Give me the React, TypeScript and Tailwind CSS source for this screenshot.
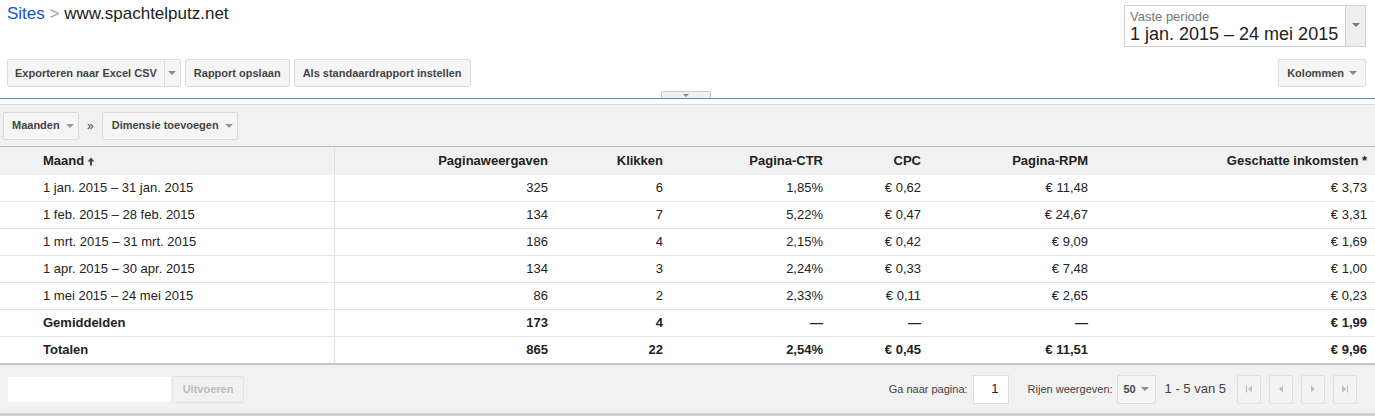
const rows: string[][] = [
  ["1 jan. 2015 – 31 jan. 2015", "325", "6", "1,85%", "€ 0,62", "€ 11,48", "€ 3,73"],
  ["1 feb. 2015 – 28 feb. 2015", "134", "7", "5,22%", "€ 0,47", "€ 24,67", "€ 3,31"],
  ["1 mrt. 2015 – 31 mrt. 2015", "186", "4", "2,15%", "€ 0,42", "€ 9,09", "€ 1,69"],
  ["1 apr. 2015 – 30 apr. 2015", "134", "3", "2,24%", "€ 0,33", "€ 7,48", "€ 1,00"],
  ["1 mei 2015 – 24 mei 2015", "86", "2", "2,33%", "€ 0,11", "€ 2,65", "€ 0,23"],
];

const averages = ["Gemiddelden", "173", "4", "—", "—", "—", "€ 1,99"];
const totals = ["Totalen", "865", "22", "2,54%", "€ 0,45", "€ 11,51", "€ 9,96"];

const headers = ["Paginaweergaven", "Klikken", "Pagina-CTR", "CPC", "Pagina-RPM", "Geschatte inkomsten *"];

const gridCols = "grid grid-cols-[335px_221px_115px_160px_98px_167px_1fr]";

function Caret({ color = "border-t-[#777]" }: { color?: string }) {
  return <span className={`inline-block h-0 w-0 border-x-[4px] border-t-[4px] border-x-transparent ${color}`} />;
}

function ToolButton({ children }: { children: React.ReactNode }) {
  return (
    <button className="flex h-[28px] items-center rounded-[2px] border border-[#dcdcdc] bg-[#f5f5f5] px-[8px] text-[11px] font-bold text-[#444]">
      {children}
    </button>
  );
}

function PagerIcon({ kind }: { kind: "first" | "prev" | "next" | "last" }) {
  return (
    <svg width="8" height="8" viewBox="0 0 8 8" fill="#bdbdbd">
      {kind === "first" && (
        <>
          <rect x="1" y="0.5" width="1" height="7" />
          <path d="M7 0.5 L3 4 L7 7.5 Z" />
        </>
      )}
      {kind === "prev" && <path d="M6 0.5 L2 4 L6 7.5 Z" />}
      {kind === "next" && <path d="M2 0.5 L6 4 L2 7.5 Z" />}
      {kind === "last" && (
        <>
          <path d="M1 0.5 L5 4 L1 7.5 Z" />
          <rect x="6" y="0.5" width="1" height="7" />
        </>
      )}
    </svg>
  );
}

function DataRow({ cells, bold, last }: { cells: string[]; bold?: boolean; last?: boolean }) {
  return (
    <div
      className={`${gridCols} ${last ? "h-[28px] border-b-2 border-[#c6c6c6]" : "h-[27px] border-b border-[#e3e3e3]"} text-[13px] text-[#222] ${bold ? "font-bold" : ""}`}
    >
      <div className="flex items-center border-r border-[#e0e0e0] pl-[43px]">{cells[0]}</div>
      {cells.slice(1).map((c, i) => (
        <div key={i} className="flex items-center justify-end pr-[8px]">
          {c}
        </div>
      ))}
    </div>
  );
}

export default function App() {
  return (
    <div className="h-[416px] w-[1375px] overflow-hidden bg-white font-['Liberation_Sans',Arial,sans-serif] text-[#222]">
      {/* breadcrumb + date range */}
      <div className="flex items-start justify-between pl-[7px] pr-[9px]">
        <div className="pt-[4px] text-[17px] leading-[20px]">
          <span className="text-[#1155cc]">Sites</span>
          <span className="text-[#999]"> &gt; </span>
          <span>www.spachtelputz.net</span>
        </div>
        <div className="mt-[5px] flex h-[42px] border border-[#d0d0d0]">
          <div className="w-[220px] bg-white px-[5px] pt-[3px]">
            <div className="text-[13px] leading-[15px] text-[#777]">Vaste periode</div>
            <div className="text-[18px] leading-[21px] text-[#222]">1 jan. 2015 – 24 mei 2015</div>
          </div>
          <div className="flex w-[20px] justify-center border-l border-[#d0d0d0] bg-[#eeeeee] pt-[17px]">
            <Caret />
          </div>
        </div>
      </div>

      {/* toolbar */}
      <div className="mt-[12px] flex justify-between pl-[7px] pr-[9px]">
        <div className="flex gap-[4px]">
          <div className="flex h-[28px] rounded-[2px] border border-[#dcdcdc] bg-[#f5f5f5] text-[11px] font-bold text-[#444]">
            <span className="flex items-center px-[7px]">Exporteren naar Excel CSV</span>
            <span className="flex w-[16px] items-center justify-center border-l border-[#dcdcdc]">
              <Caret color="border-t-[#888]" />
            </span>
          </div>
          <ToolButton>Rapport opslaan</ToolButton>
          <ToolButton>Als standaardrapport instellen</ToolButton>
        </div>
        <ToolButton>
          <span className="mr-[5px]">Kolommen</span>
          <Caret color="border-t-[#888]" />
        </ToolButton>
      </div>

      {/* collapse handle */}
      <div className="mt-[4px] flex justify-center">
        <div className="mr-[3px] flex h-[7px] w-[50px] items-center justify-center rounded-t-[2px] border-x border-t border-[#c9c9c9] bg-[#f1f1f1]">
          <span className="inline-block h-0 w-0 border-x-[3px] border-t-[3px] border-x-transparent border-t-[#888]" />
        </div>
      </div>
      <div className="h-px bg-[#5b86c9]" />

      {/* dimension bar */}
      <div className="mt-[5px] flex h-[43px] items-center gap-[8px] border-y border-t-[#dadada] border-b-[#b9b9b9] bg-[#f1f1f1] pl-[3px]">
        <button className="flex h-[28px] w-[76px] items-center gap-[6px] rounded-[2px] border border-[#dadada] bg-[#f5f5f5] pl-[8px] text-[11px] font-bold text-[#444]">
          Maanden
          <Caret color="border-t-[#999]" />
        </button>
        <span className="text-[12px] text-[#444]">»</span>
        <button className="flex h-[28px] w-[136px] items-center gap-[6px] rounded-[2px] border border-[#dadada] bg-[#f5f5f5] pl-[9px] text-[11px] font-bold text-[#444]">
          Dimensie toevoegen
          <Caret color="border-t-[#999]" />
        </button>
      </div>

      {/* table */}
      <div className={`${gridCols} h-[28px] bg-[#f1f1f1] text-[13px] font-bold text-[#222]`}>
        <div className="flex items-center border-r border-[#e0e0e0] pl-[43px]">
          Maand
          <svg className="ml-[3px] mt-[1px]" width="8" height="9" viewBox="0 0 8 9" fill="#444">
            <path d="M4 0.5 L7.5 4.5 L5 4.5 L5 8.5 L3 8.5 L3 4.5 L0.5 4.5 Z" />
          </svg>
        </div>
        {headers.map((h) => (
          <div key={h} className="flex items-center justify-end pr-[8px]">
            {h}
          </div>
        ))}
      </div>
      {rows.map((r) => (
        <DataRow key={r[0]} cells={r} />
      ))}
      <DataRow cells={averages} bold />
      <DataRow cells={totals} bold last />

      {/* footer */}
      <div className="flex h-[51px] items-center justify-between border-b-[3px] border-[#cfcfcf] bg-[#f1f1f1] pl-[7px] pr-[18px]">
        <div className="flex">
          <div className="h-[27px] w-[165px] border border-[#f1f1f1] bg-white" />
          <button className="h-[27px] w-[72px] rounded-[2px] border border-[#e2e2e2] bg-[#f1f1f1] text-[11px] font-bold text-[#bbb]">
            Uitvoeren
          </button>
        </div>
        <div className="flex items-center text-[11px] text-[#444]">
          <span>Ga naar pagina:</span>
          <div className="ml-[5px] flex h-[29px] w-[36px] items-center justify-end border border-[#dcdcdc] bg-white pr-[9px] text-[13px] text-[#222]">
            1
          </div>
          <span className="ml-[19px]">Rijen weergeven:</span>
          <button className="ml-[4px] flex h-[29px] w-[39px] items-center justify-center gap-[5px] rounded-[2px] border border-[#dcdcdc] bg-[#f5f5f5] text-[11px] font-bold text-[#444]">
            50
            <Caret color="border-t-[#888]" />
          </button>
          <span className="ml-[9px] text-[13px] text-[#444]">1 - 5 van 5</span>
          <div className="ml-[11px] flex gap-[8px]">
            {(["first", "prev", "next", "last"] as const).map((k) => (
              <button
                key={k}
                className="flex h-[29px] w-[24px] items-center justify-center rounded-[2px] border border-[#e0e0e0] bg-[#f3f3f3]"
              >
                <PagerIcon kind={k} />
              </button>
            ))}
          </div>
        </div>
      </div>
    </div>
  );
}
